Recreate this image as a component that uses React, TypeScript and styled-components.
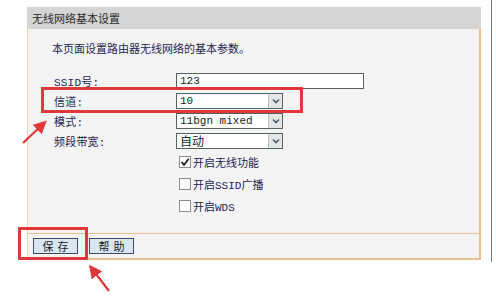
import React from 'react';
import styled, { createGlobalStyle } from 'styled-components';

const GlobalStyle = createGlobalStyle`
  html, body {
    margin: 0;
    padding: 0;
    background: #ffffff;
  }
  body {
    font-family: "Noto Sans CJK SC", "Liberation Sans", sans-serif;
  }
`;

const cjk = `"Noto Sans CJK SC", "Liberation Sans", sans-serif`;
const mono = `"Liberation Mono", "Noto Sans CJK SC", monospace`;

const Page = styled.div`
  position: relative;
  width: 496px;
  height: 304px;
  padding: 7px 0 0 27px;
  box-sizing: border-box;
  overflow: hidden;
`;

const EdgeLine = styled.div`
  position: absolute;
  left: 491px;
  top: 0;
  width: 1px;
  height: 262px;
  background: #7a7a7a;
`;

const Panel = styled.div`
  width: 454px;
  display: flex;
  flex-direction: column;
`;

const Header = styled.div`
  height: 22px;
  background: #d5d5d5;
  display: flex;
  align-items: center;
  padding-left: 5px;
  font-family: ${cjk};
  font-size: 11px;
  color: #2a2a2a;
`;

const Body = styled.div`
  height: 204px;
  background: #f4f4f4;
  border-left: 1px solid #f3d2b0;
  border-right: 2px solid #efc08e;
  box-sizing: border-box;
  padding: 12px 0 0 26px;
  display: flex;
  flex-direction: column;
`;

const Intro = styled.div`
  font-family: ${cjk};
  font-size: 11px;
  line-height: 14px;
  color: #1c2450;
  margin-left: -2px;
`;

const Form = styled.div`
  margin-top: 16px;
  display: grid;
  grid-template-columns: 122px auto;
  grid-auto-rows: 20px;
  align-items: center;
`;

const Label = styled.div`
  font-family: ${mono};
  font-size: 11px;
  color: #1c2450;
  letter-spacing: 0.2px;
`;

const TextInput = styled.div`
  width: 188px;
  height: 16px;
  background: #fff;
  border: 1px solid #56625f;
  box-sizing: border-box;
  font-family: ${mono};
  font-size: 11px;
  line-height: 14px;
  padding-left: 3px;
  color: #222;
`;

const Select = styled.div`
  width: 107px;
  height: 16px;
  background: #fff;
  border: 1px solid #56625f;
  box-sizing: border-box;
  display: flex;
  align-items: center;
  justify-content: space-between;
`;

const SelectValue = styled.span<{ $cjk?: boolean }>`
  padding-left: 3px;
  font-family: ${(p) => (p.$cjk ? cjk : mono)};
  font-size: ${(p) => (p.$cjk ? '12px' : '11px')};
  color: #222;
  line-height: 14px;
`;

const SelectArrow = styled.span`
  width: 14px;
  height: 14px;
  background: #e4e6e6;
  border-left: 1px solid #b8c0c0;
  box-sizing: border-box;
  display: flex;
  align-items: center;
  justify-content: center;
`;

const Checks = styled.div`
  margin-left: 122px;
  display: flex;
  flex-direction: column;
`;

const CheckRow = styled.div`
  height: 22px;
  display: flex;
  align-items: center;
  gap: 2px;
  margin-left: 3px;
`;

const Box = styled.span`
  width: 12px;
  height: 12px;
  background: #fff;
  border: 1px solid #8c8c8c;
  box-sizing: border-box;
  display: flex;
  align-items: center;
  justify-content: center;
`;

const CheckText = styled.span`
  font-family: ${mono};
  font-size: 11px;
  color: #1c2450;
`;

const Footer = styled.div`
  height: 24px;
  background: #f4f4f4;
  border-top: 1px solid #efc08e;
  border-bottom: 2px solid #efc08e;
  border-left: 1px solid #f3d2b0;
  border-right: 2px solid #efc08e;
  display: flex;
  align-items: center;
  gap: 11px;
  padding-left: 5px;
`;

const Button = styled.div`
  width: 45px;
  height: 16px;
  background: #d9e7f5;
  border: 1px solid #3e4e5e;
  box-sizing: border-box;
  display: flex;
  align-items: center;
  justify-content: center;
  font-family: ${cjk};
  font-size: 11px;
  letter-spacing: 4px;
  padding-left: 4px;
  color: #1a1a1a;
`;

const RedBox = styled.div<{ $l: number; $t: number; $w: number; $h: number }>`
  position: absolute;
  left: ${(p) => p.$l}px;
  top: ${(p) => p.$t}px;
  width: ${(p) => p.$w}px;
  height: ${(p) => p.$h}px;
  border: 3px solid #e0383a;
  box-sizing: border-box;
`;

const Overlay = styled.svg`
  position: absolute;
  left: 0;
  top: 0;
  pointer-events: none;
`;

const Chevron = () => (
  <svg width="8" height="6" viewBox="0 0 8 6">
    <path d="M1 1.5 L4 4.5 L7 1.5" fill="none" stroke="#4a5a66" strokeWidth="1.6" />
  </svg>
);

const Tick = () => (
  <svg width="10" height="10" viewBox="0 0 10 10">
    <path d="M1.5 5 L4 7.8 L8.8 1.8" fill="none" stroke="#222" strokeWidth="1.8" />
  </svg>
);

const Dropdown = ({ value, cjkFont }: { value: string; cjkFont?: boolean }) => (
  <Select>
    <SelectValue $cjk={cjkFont}>{value}</SelectValue>
    <SelectArrow>
      <Chevron />
    </SelectArrow>
  </Select>
);

const Check = ({ on, label }: { on?: boolean; label: string }) => (
  <CheckRow>
    <Box>{on && <Tick />}</Box>
    <CheckText>{label}</CheckText>
  </CheckRow>
);

export default function App() {
  return (
    <>
      <GlobalStyle />
      <Page>
        <EdgeLine />
        <Panel>
          <Header>无线网络基本设置</Header>
          <Body>
            <Intro>本页面设置路由器无线网络的基本参数。</Intro>
            <Form>
              <Label>SSID号:</Label>
              <TextInput>123</TextInput>
              <Label>信道:</Label>
              <Dropdown value="10" />
              <Label>模式:</Label>
              <Dropdown value="11bgn mixed" />
              <Label>频段带宽:</Label>
              <Dropdown value="自动" cjkFont />
            </Form>
            <Checks>
              <Check on label="开启无线功能" />
              <Check label="开启SSID广播" />
              <Check label="开启WDS" />
            </Checks>
          </Body>
          <Footer>
            <Button>保存</Button>
            <Button>帮助</Button>
          </Footer>
        </Panel>
        <RedBox $l={41} $t={87} $w={262} $h={26} />
        <RedBox $l={18} $t={227} $w={70} $h={33} />
        <Overlay width="496" height="304">
          <defs>
            <marker id="head" markerWidth="6" markerHeight="6" refX="3" refY="3" orient="auto">
              <path d="M0 0 L6 3 L0 6 Z" fill="#e0383a" />
            </marker>
          </defs>
          <line x1="23" y1="143" x2="42" y2="125" stroke="#e0383a" strokeWidth="2.2" markerEnd="url(#head)" />
          <line x1="109" y1="291" x2="93" y2="270" stroke="#e0383a" strokeWidth="2.2" markerEnd="url(#head)" />
        </Overlay>
      </Page>
    </>
  );
}
